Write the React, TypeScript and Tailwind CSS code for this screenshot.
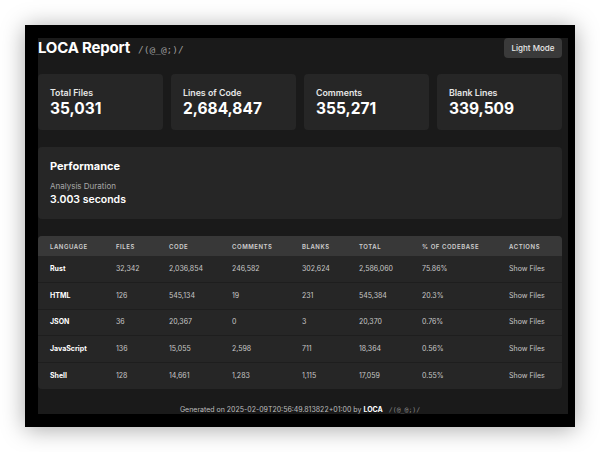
import React from 'react';

const stats = [
  { label: 'Total Files', value: '35,031' },
  { label: 'Lines of Code', value: '2,684,847' },
  { label: 'Comments', value: '355,271' },
  { label: 'Blank Lines', value: '339,509' },
];

const rows = [
  ['Rust', '32,342', '2,036,854', '246,582', '302,624', '2,586,060', '75.86%'],
  ['HTML', '126', '545,134', '19', '231', '545,384', '20.3%'],
  ['JSON', '36', '20,367', '0', '3', '20,370', '0.76%'],
  ['JavaScript', '136', '15,055', '2,598', '711', '18,364', '0.56%'],
  ['Shell', '128', '14,661', '1,283', '1,115', '17,059', '0.55%'],
];

const headers = ['Language', 'Files', 'Code', 'Comments', 'Blanks', 'Total', '% of Codebase', 'Actions'];
const widths = ['w-[66px]', 'w-[53px]', 'w-[63px]', 'w-[70px]', 'w-[57px]', 'w-[63px]', 'w-[87px]', 'w-[65px]'];

export default function App() {
  return (
    <div className="w-[600px] h-[452px] bg-white pt-[25px] pl-[25px] font-['Inter',sans-serif]">
      <div className="w-[550px] h-[402px] bg-black pt-[13px] pl-[13px] pr-[7px] pb-[13px] shadow-[0_2px_22px_rgba(0,0,0,0.35)]">
        <div className="h-full bg-[#1a1a1a] pr-[6px] overflow-hidden text-white">
          {/* header */}
          <div className="flex items-start justify-between h-[20px]">
            <div className="flex items-baseline gap-[8px] pt-[1px]">
              <h1 className="text-[15px] font-bold leading-[18px] tracking-[-0.2px]">LOCA Report</h1>
              <span className="font-['DejaVu_Sans_Mono',monospace] text-[9.5px] text-[#9a9a9a]">/(@_@;)/</span>
            </div>
            <button className="h-[20px] w-[58px] rounded-[4px] bg-[#3a3a3a] text-[8px] font-medium text-[#e8e8e8]">
              Light Mode
            </button>
          </div>

          {/* stats */}
          <div className="grid grid-cols-4 gap-[8px] mt-[16px]">
            {stats.map((s) => (
              <div key={s.label} className="h-[56px] rounded-[4px] bg-[#262626] px-[12px] pt-[13px]">
                <div className="text-[8.8px] font-semibold leading-[11px] text-[#e6e6e6]">{s.label}</div>
                <div className="text-[15.5px] font-bold leading-[20px] mt-[1px]">{s.value}</div>
              </div>
            ))}
          </div>

          {/* performance */}
          <div className="mt-[17px] h-[72px] rounded-[4px] bg-[#262626] px-[12px] pt-[12px]">
            <div className="text-[11px] font-bold leading-[14px]">Performance</div>
            <div className="mt-[8px] text-[8px] leading-[10px] text-[#a8a8a8]">Analysis Duration</div>
            <div className="mt-[2px] text-[10.5px] font-semibold leading-[13px]">3.003 seconds</div>
          </div>

          {/* table */}
          <div className="mt-[17px] rounded-[4px] overflow-hidden bg-[#262626]">
            <table className="w-full border-collapse table-fixed">
              <thead>
                <tr className="h-[20px] bg-[#383838]">
                  {headers.map((h, i) => (
                    <th
                      key={h}
                      className={`${widths[i]} pl-[12px] text-left text-[6px] font-semibold uppercase tracking-[0.55px] text-[#cfcfcf]`}
                    >
                      {h}
                    </th>
                  ))}
                </tr>
              </thead>
              <tbody>
                {rows.map((r, ri) => (
                  <tr key={r[0]} className={`h-[26.6px] ${ri < rows.length - 1 ? 'border-b border-[#1e1e1e]' : ''}`}>
                    {r.map((c, ci) => (
                      <td
                        key={ci}
                        className={`pl-[12px] text-[7px] ${ci === 0 ? 'font-bold text-white' : 'text-[#c8c8c8]'}`}
                      >
                        {c}
                      </td>
                    ))}
                    <td className="pl-[12px] text-[7px] text-[#c8c8c8] whitespace-nowrap">Show Files</td>
                  </tr>
                ))}
              </tbody>
            </table>
          </div>

          {/* footer */}
          <div className="mt-[16px] flex items-baseline justify-center gap-[6px] text-[7px] text-[#bdbdbd]">
            <span>
              Generated on 2025-02-09T20:56:49.813822+01:00 by <span className="font-bold text-white">LOCA</span>
            </span>
            <span className="font-['DejaVu_Sans_Mono',monospace] text-[6.5px] text-[#8a8a8a]">/(@_@;)/</span>
          </div>
        </div>
      </div>
    </div>
  );
}
